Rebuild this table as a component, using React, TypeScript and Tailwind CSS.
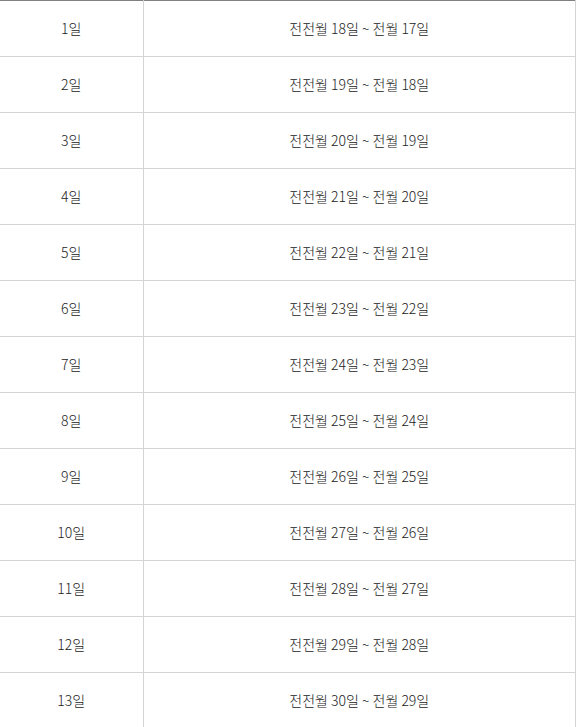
import React from 'react'

const rows = Array.from({ length: 13 }, (_, i) => ({
  day: `${i + 1}일`,
  range: `전전월 ${i + 18}일 ~ 전월 ${i + 17}일`
}))

export default function App() {
  return (
    <div className="w-[576px] bg-white" style={{ fontFamily: '"Noto Sans CJK KR", "Noto Sans", sans-serif' }}>
      <table className="w-full border-collapse border-t border-t-[#808080] text-[14px] font-light text-[#222]">
        <tbody>
          {rows.map((r) => (
            <tr key={r.day} className="h-[56px] border-b border-[#d4d4d4]">
              <td className="w-[143px] border-r border-[#d4d4d4] text-center">{r.day}</td>
              <td className="border-r border-[#d4d4d4] text-center">{r.range}</td>
            </tr>
          ))}
        </tbody>
      </table>
    </div>
  )
}
